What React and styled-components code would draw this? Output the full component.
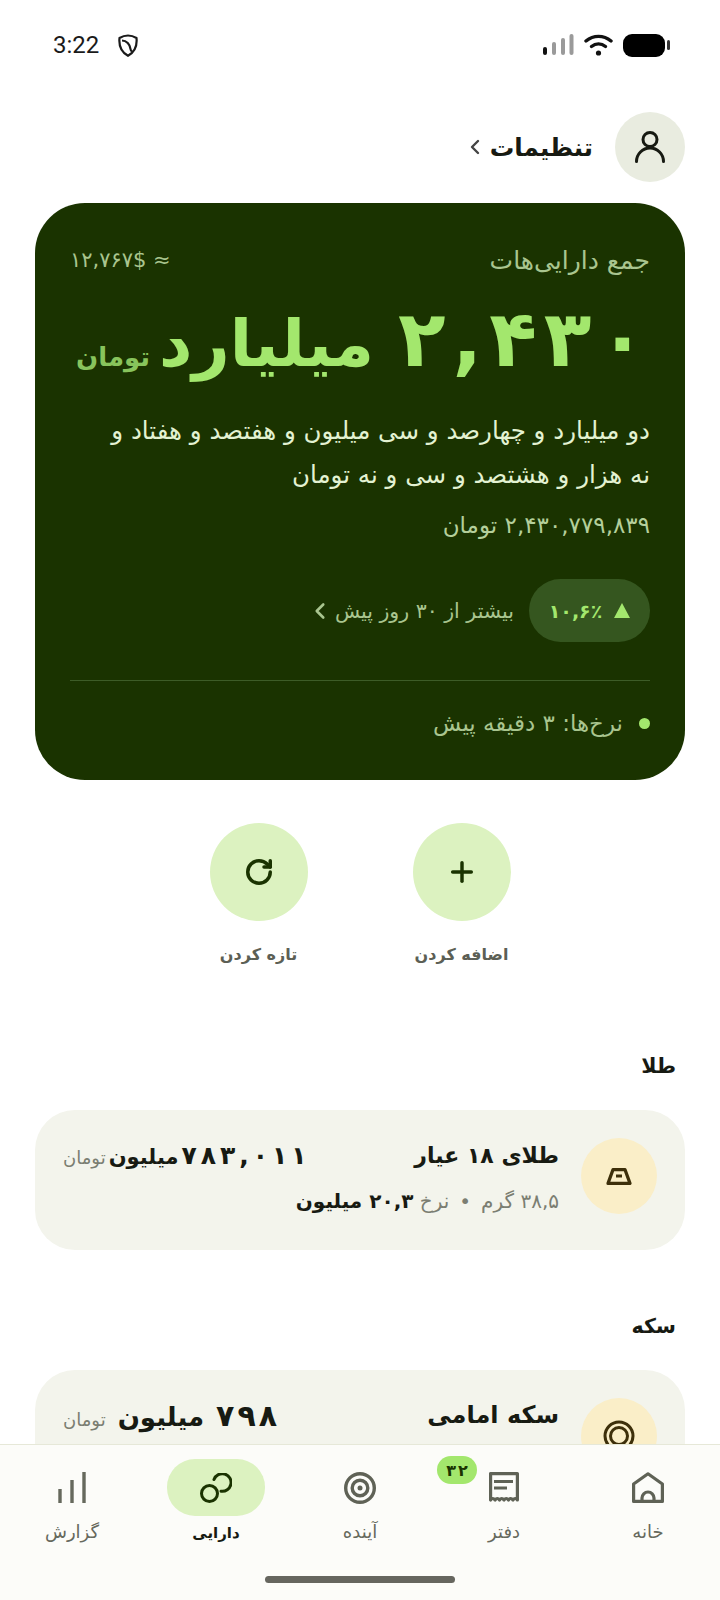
import React from 'react';
import styled, { createGlobalStyle } from 'styled-components';
import { Plus, RotateCw, ChevronLeft } from 'lucide-react';

const GlobalStyle = createGlobalStyle`
  html, body {
    margin: 0;
    padding: 0;
    background: #fff;
  }
  * { box-sizing: border-box; }
`;

const Screen = styled.div`
  width: 720px;
  height: 1600px;
  display: flex;
  flex-direction: column;
  overflow: hidden;
  direction: rtl;
  font-family: "DejaVu Sans", "Noto Sans", sans-serif;
  color: #171a12;
  background: #fff;
`;

const Scroll = styled.div`
  flex: 1;
  min-height: 0;
  overflow: hidden;
`;

const StatusBar = styled.div`
  direction: ltr;
  height: 90px;
  padding: 0 50px 0 53px;
  display: flex;
  align-items: center;
  justify-content: space-between;
`;

const StatusGroup = styled.div`
  display: flex;
  align-items: center;
  gap: ${p => p.$gap || 10}px;
`;

const Time = styled.span`
  font-family: Roboto, sans-serif;
  font-size: 24px;
  color: #1a1a1a;
`;

const Header = styled.div`
  height: 70px;
  margin: 22px 35px 21px;
  display: flex;
  align-items: center;
  gap: 22px;
`;

const Avatar = styled.div`
  width: 70px;
  height: 70px;
  border-radius: 50%;
  background: #e9ece0;
  display: flex;
  align-items: center;
  justify-content: center;
`;

const Title = styled.div`
  display: flex;
  align-items: center;
  gap: 3px;
  font-size: 24.5px;
  font-weight: 700;
`;

const HeroCard = styled.section`
  margin: 0 35px;
  height: 577px;
  padding: 42px 35px 0;
  border-radius: 50px;
  background: #1a3300;
  color: #e3f2d2;
`;

const TopRow = styled.div`
  display: flex;
  justify-content: space-between;
  align-items: center;
  height: 30px;
  color: #a9c58f;
`;

const TopLabel = styled.span`
  font-size: 25px;
`;

const TopUsd = styled.span`
  font-size: 21px;
`;

/* letter-spacing has no effect on the Persian digits here, so they get a flex gap */
const SpacedRow = styled.span`
  direction: ltr;
  display: inline-flex;
  gap: ${p => p.$gap}px;
  font-size: ${p => p.$size}px;
`;

function Spaced({ text, gap, size }) {
  return (
    <SpacedRow $gap={gap} $size={size}>
      {[...text].map((ch, i) => <span key={i}>{ch}</span>)}
    </SpacedRow>
  );
}

const Total = styled.div`
  display: flex;
  align-items: baseline;
  height: 104px;
  padding: 0 4px 0 6px;
  margin-top: 12px;
  color: #a3e76d;
  white-space: nowrap;
  line-height: 104px;
  font-weight: 700;
`;

const TotalWord = styled.span`
  margin-right: 24px;
  font-size: 65px;
`;

const TotalUnit = styled.span`
  margin-right: auto;
  font-size: 26px;
  color: #88c45c;
`;

const Words = styled.p`
  margin: 18px 0 0;
  padding-left: 24px;
  font-size: 24.5px;
  line-height: 44px;
`;

const Exact = styled.div`
  margin-top: 13px;
  font-size: 23px;
  line-height: 30px;
  color: #b4cf9b;
`;

const ChangeRow = styled.div`
  margin-top: 39px;
  display: flex;
  align-items: center;
  gap: 15px;
  font-size: 20.5px;
  color: #a9c58f;
`;

const ChangeChevron = styled(ChevronLeft)`
  margin-right: -13px;
`;

const Chip = styled.div`
  width: 121px;
  height: 63px;
  border-radius: 32px;
  background: #35561f;
  color: #a3e76d;
  display: flex;
  align-items: center;
  justify-content: center;
  gap: 12px;
  font-size: 19px;
  font-weight: 700;
`;

const Triangle = styled.span`
  width: 0;
  height: 0;
  border-left: 8px solid transparent;
  border-right: 8px solid transparent;
  border-bottom: 15px solid #a3e76d;
`;

const Divider = styled.div`
  height: 1px;
  margin-top: 38px;
  background: #3d5c27;
`;

const RateRow = styled.div`
  margin-top: 27px;
  display: flex;
  align-items: center;
  gap: 16px;
  font-size: 23px;
  line-height: 30px;
  color: #a9c58f;
`;

const Dot = styled.span`
  width: 11px;
  height: 11px;
  border-radius: 50%;
  background: #a3e76d;
`;

const Actions = styled.div`
  margin-top: 43px;
  display: flex;
  justify-content: center;
  gap: 105px;
`;

const Action = styled.div`
  width: 98px;
  display: flex;
  flex-direction: column;
  align-items: center;
  gap: 24px;
  font-size: 16px;
  font-weight: 700;
  color: #5c5f55;
  white-space: nowrap;
`;

const ActionCircle = styled.div`
  width: 98px;
  height: 98px;
  border-radius: 50%;
  background: #dcf2c0;
  display: flex;
  align-items: center;
  justify-content: center;
  color: #1a3300;
`;

const SectionTitle = styled.h2`
  margin: ${p => p.$top}px 44px 0;
  height: 30px;
  line-height: 30px;
  font-size: 20.5px;
  font-weight: 700;
`;

const Asset = styled.div`
  margin: 29px 35px 0;
  height: 140px;
  padding: 28px 28px 0 28px;
  border-radius: 40px;
  background: #f3f4ec;
  display: flex;
  gap: 22px;
`;

const AssetIcon = styled.div`
  flex: none;
  width: 76px;
  height: 76px;
  border-radius: 50%;
  background: #faeec8;
  display: flex;
  align-items: center;
  justify-content: center;
`;

const AssetBody = styled.div`
  flex: 1;
  min-width: 0;
  margin-top: -3px;
`;

const AssetRow = styled.div`
  display: flex;
  justify-content: space-between;
  align-items: center;
  height: 40px;
  white-space: nowrap;
`;

const AssetName = styled.span`
  font-size: ${p => (p.$large ? 24 : 22)}px;
  font-weight: 700;
`;

const AssetAmount = styled.span`
  display: inline-flex;
  align-items: baseline;
  gap: ${p => (p.$large ? 12 : 3)}px;
  font-size: ${p => (p.$large ? 26 : 21)}px;
  font-weight: 700;
`;

const AssetUnit = styled.span`
  font-size: 18px;
  font-weight: 400;
  color: #7b7e72;
`;

const AssetSub = styled.div`
  margin-top: 10px;
  font-size: 20px;
  line-height: 32px;
  color: #7b7e72;
  white-space: nowrap;
`;

const Sep = styled.span`
  margin: 0 10px;
`;

const Strong = styled.span`
  color: #171a12;
  font-weight: 700;
`;

const Nav = styled.nav`
  position: relative;
  flex: none;
  height: 156px;
  padding-top: 14px;
  border-top: 1px solid #e6e8d8;
  background: #fcfcf9;
  display: grid;
  grid-template-columns: repeat(5, 1fr);
  align-items: start;
`;

const NavItem = styled.div`
  display: flex;
  flex-direction: column;
  align-items: center;
  font-size: ${p => (p.$active ? 15 : 18)}px;
  font-weight: ${p => (p.$active ? 700 : 400)};
  color: ${p => (p.$active ? '#171a12' : '#66695d')};
`;

const NavIcon = styled.div`
  position: relative;
  width: 98px;
  height: 57px;
  margin-bottom: ${p => (p.$active ? 8 : 5)}px;
  border-radius: 28px;
  background: ${p => (p.$active ? '#dcf2c0' : 'transparent')};
  display: flex;
  align-items: center;
  justify-content: center;
`;

const Badge = styled.span`
  position: absolute;
  top: -3px;
  right: 76px;
  width: 40px;
  height: 28px;
  border-radius: 14px;
  background: #a3e76d;
  color: #1a3300;
  font-weight: 700;
  display: flex;
  align-items: center;
  justify-content: center;
`;

const HomeBar = styled.div`
  position: absolute;
  left: 265px;
  bottom: 17px;
  width: 190px;
  height: 7px;
  border-radius: 4px;
  background: #66665f;
`;

function Signal() {
  return (
    <svg width="31" height="22" viewBox="0 0 31 22">
      <rect x="0" y="13" width="4" height="8" rx="2" fill="#111" />
      <rect x="9" y="8" width="4" height="13" rx="2" fill="#9a9a9a" />
      <rect x="18" y="4" width="4" height="17" rx="2" fill="#9a9a9a" />
      <rect x="26.500" y="0" width="4" height="21" rx="2" fill="#9a9a9a" />
    </svg>
  );
}

function Wifi() {
  return (
    <svg width="29" height="22" viewBox="0 0 29 22" fill="none" stroke="#111" strokeWidth="3.400" strokeLinecap="round">
      <path d="M2 7C9.500 .8 19.500 .8 27 7" />
      <path d="M7.500 12.500c4.200-3.300 9.800-3.300 14 0" />
      <circle cx="14.500" cy="19" r="2.600" fill="#111" stroke="none" />
    </svg>
  );
}

function Battery() {
  return (
    <svg width="47" height="23" viewBox="0 0 47 23">
      <rect x="0" y="0" width="42" height="23" rx="9" fill="#000" />
      <rect x="44" y="6" width="3" height="10" rx="1.500" fill="#333" />
    </svg>
  );
}

function Shield() {
  return (
    <svg width="20" height="23" viewBox="0 0 20 23" fill="none" stroke="#1a1a1a" strokeWidth="2.200" strokeLinejoin="round">
      <path d="M10 1.500C13 1.500 16 2.500 18.500 4c.7 7-1.500 14-8.500 17.800C3 18 .8 11 1.500 4 4 2.500 7 1.500 10 1.500Z" />
      <path d="M4 6.500c4.500 0 8 4 8.500 8.500.1 1 .6 2 1.500 2.500" />
    </svg>
  );
}

function Person() {
  return (
    <svg width="30" height="32" viewBox="0 0 30 32" fill="none" stroke="#171a12" strokeWidth="3" strokeLinecap="round">
      <circle cx="15" cy="8.500" r="7" />
      <path d="M1.500 30.500a13.500 13.500 0 0 1 27 0" />
    </svg>
  );
}

function GoldBar() {
  return (
    <svg width="26" height="17" viewBox="0 0 26 17" fill="none" stroke="#3d2f0a" strokeWidth="3.200" strokeLinejoin="round">
      <path d="M7 1.600h12l5 13.800H2L7 1.600Z" />
      <rect x="10" y="6.500" width="6" height="3" fill="#3d2f0a" stroke="none" />
    </svg>
  );
}

function Coin() {
  return (
    <svg width="32" height="32" viewBox="0 0 32 32" fill="none" stroke="#3d2f0a" strokeWidth="3">
      <circle cx="16" cy="16" r="14" />
      <circle cx="16" cy="16" r="8.500" />
    </svg>
  );
}

function HomeIcon() {
  return (
    <svg width="32" height="31" viewBox="0 0 32 31" fill="none" stroke="#5f6256" strokeWidth="3.200" strokeLinejoin="round">
      <path d="M1.600 29.400V12L16 1.800 30.400 12v17.400H1.600Z" />
      <path d="M10 29.400v-3.400a6 6 0 0 1 12 0v3.400" />
    </svg>
  );
}

function Receipt() {
  return (
    <svg width="30" height="31" viewBox="0 0 30 31" fill="none" stroke="#5f6256" strokeWidth="3.200">
      <path d="M1.600 1.600H28.400V28q-2.230-3-4.470 0q-2.230-3-4.470 0q-2.230-3-4.470 0q-2.230-3-4.470 0q-2.230-3-4.470 0q-2.230-3-4.470 0V1.600Z" strokeLinejoin="round" />
      <path d="M5 9.500h19M5 16h13" />
    </svg>
  );
}

function Target() {
  return (
    <svg width="32" height="32" viewBox="0 0 32 32" fill="none" stroke="#5f6256" strokeWidth="3.400">
      <circle cx="16" cy="16" r="14.300" />
      <circle cx="16" cy="16" r="7.800" />
      <circle cx="16" cy="16" r="2.500" fill="#5f6256" stroke="none" />
    </svg>
  );
}

function Rings() {
  return (
    <svg width="32" height="30" viewBox="0 0 32 30" fill="none" stroke="#1a3300" strokeWidth="3" strokeLinecap="round">
      <circle cx="9.500" cy="20.500" r="8" />
      <path d="M14 6.500A8.800 8.800 0 1 1 21 18.200" />
    </svg>
  );
}

function Bars() {
  return (
    <svg width="28" height="31" viewBox="0 0 28 31" fill="none" stroke="#66695d" strokeWidth="3.400">
      <path d="M2 31V17M14 31V8M26 31V0" />
    </svg>
  );
}

const navItems = [
  { label: 'خانه', icon: <HomeIcon /> },
  { label: 'دفتر', icon: <Receipt />, badge: '۳۲' },
  { label: 'آینده', icon: <Target /> },
  { label: 'دارایی', icon: <Rings />, active: true },
  { label: 'گزارش', icon: <Bars /> },
];

export default function App() {
  return (
    <>
      <GlobalStyle />
      <Screen>
        <Scroll>
          <StatusBar>
            <StatusGroup $gap={19}>
              <Time>3:22</Time>
              <Shield />
            </StatusGroup>
            <StatusGroup>
              <Signal />
              <Wifi />
              <Battery />
            </StatusGroup>
          </StatusBar>

          <Header>
            <Avatar><Person /></Avatar>
            <Title>
              تنظیمات
              <ChevronLeft size={24} color="#444" strokeWidth={2.400} />
            </Title>
          </Header>

          <HeroCard>
            <TopRow>
              <TopLabel>جمع دارایی‌هات</TopLabel>
              <TopUsd>≈ ۱۲,۷۶۷$</TopUsd>
            </TopRow>
            <Total>
              <Spaced text="۲,۴۳۰" gap={7} size={78} />
              <TotalWord>میلیارد</TotalWord>
              <TotalUnit>تومان</TotalUnit>
            </Total>
            <Words>
              دو میلیارد و چهارصد و سی میلیون و هفتصد و هفتاد و نه هزار و هشتصد و سی و نه تومان
            </Words>
            <Exact>۲,۴۳۰,۷۷۹,۸۳۹ تومان</Exact>
            <ChangeRow>
              <Chip>
                <Triangle />
                ۱۰,۶٪
              </Chip>
              بیشتر از ۳۰ روز پیش
              <ChangeChevron size={26} strokeWidth={2.400} />
            </ChangeRow>
            <Divider />
            <RateRow>
              <Dot />
              نرخ‌ها: ۳ دقیقه پیش
            </RateRow>
          </HeroCard>

          <Actions>
            <Action>
              <ActionCircle><Plus size={32} strokeWidth={2.6} /></ActionCircle>
              اضافه کردن
            </Action>
            <Action>
              <ActionCircle><RotateCw size={30} strokeWidth={2.8} /></ActionCircle>
              تازه کردن
            </Action>
          </Actions>

          <SectionTitle $top={87}>طلا</SectionTitle>
          <Asset>
            <AssetIcon><GoldBar /></AssetIcon>
            <AssetBody>
              <AssetRow>
                <AssetName>طلای ۱۸ عیار</AssetName>
                <AssetAmount>
                  <Spaced text="۷۸۳,۰۱۱" gap={4} size={25} />
                  <span>میلیون</span>
                  <AssetUnit>تومان</AssetUnit>
                </AssetAmount>
              </AssetRow>
              <AssetSub>
                ۳۸,۵ گرم
                <Sep>•</Sep>
                نرخ <Strong>۲۰,۳ میلیون</Strong>
              </AssetSub>
            </AssetBody>
          </Asset>

          <SectionTitle $top={61}>سکه</SectionTitle>
          <Asset>
            <AssetIcon><Coin /></AssetIcon>
            <AssetBody>
              <AssetRow>
                <AssetName $large>سکه امامی</AssetName>
                <AssetAmount $large>
                  <Spaced text="۷۹۸" gap={3} size={30} />
                  <span>میلیون</span>
                  <AssetUnit>تومان</AssetUnit>
                </AssetAmount>
              </AssetRow>
            </AssetBody>
          </Asset>
        </Scroll>

        <Nav>
          {navItems.map(item => (
            <NavItem key={item.label} $active={item.active}>
              <NavIcon $active={item.active}>
                {item.icon}
                {item.badge && <Badge><Spaced text={item.badge} gap={2} size={16} /></Badge>}
              </NavIcon>
              {item.label}
            </NavItem>
          ))}
          <HomeBar />
        </Nav>
      </Screen>
    </>
  );
}
